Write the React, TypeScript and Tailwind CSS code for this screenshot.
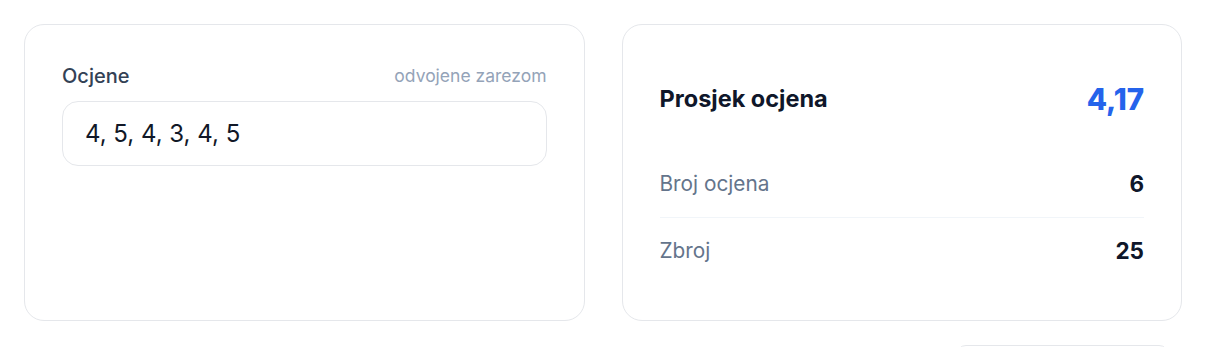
const STATS = [
  { label: "Broj ocjena", value: "6" },
  { label: "Zbroj", value: "25" },
];

export default function App() {
  return (
    <div
      className="h-screen overflow-hidden bg-white px-6 pt-6"
      style={{ fontFamily: "Inter, 'Noto Sans', sans-serif" }}
    >
      <div className="flex gap-[37px]">
        {/* input card */}
        <section className="flex h-[297px] flex-1 flex-col rounded-[20px] border border-[#e5e7eb] bg-white px-[37px] pt-[37px]">
          <div className="flex items-center justify-between leading-[28px]">
            <label className="text-[20px] font-medium text-[#334155]">Ocjene</label>
            <span className="text-[17.5px] text-[#94a3b8]">odvojene zarezom</span>
          </div>
          <div className="mt-[11px] flex h-[65px] items-center rounded-[16px] border border-[#e5e7eb] bg-white px-[22px]">
            <span className="text-[24px] text-[#111827]">4, 5, 4, 3, 4, 5</span>
          </div>
        </section>

        {/* result card */}
        <section className="flex h-[297px] flex-1 flex-col rounded-[20px] border border-[#e5e7eb] bg-white px-[37px] pt-[37px]">
          <div className="flex h-[74px] items-center justify-between">
            <h2 className="text-[23.5px] font-bold text-[#0f172a]">Prosjek ocjena</h2>
            <span className="text-[29.5px] font-extrabold text-[#2563eb]">4,17</span>
          </div>
          <div className="mt-[15px] flex flex-col">
            {STATS.map((s, i) => (
              <div
                key={s.label}
                className={`flex items-center justify-between ${
                  i > 0 ? "h-[67px] border-t border-[#f1f5f9]" : "h-[66px]"
                }`}
              >
                <span className="text-[20.8px] text-[#64748b]">{s.label}</span>
                <span className="text-[22.5px] font-bold text-[#0f172a]">{s.value}</span>
              </div>
            ))}
          </div>
        </section>
      </div>

      <div className="mt-[24px] flex justify-end pr-[13px]">
        <div className="h-10 w-[213px] rounded-[10px] border border-[#e5e7eb]" />
      </div>
    </div>
  );
}
